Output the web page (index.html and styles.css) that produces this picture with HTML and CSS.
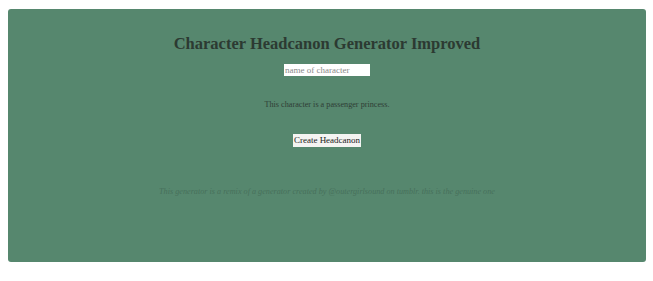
FILE: index.html
```html
<!DOCTYPE html>
<html>
<head>
<meta charset="utf-8">
<link rel="stylesheet" href="styles.css">
</head>
<body>
<div class="panel">
  <h1 class="title">Character Headcanon Generator Improved</h1>
  <input class="name-input" type="text" placeholder="name of character">
  <p class="result">This character is a passenger princess.</p>
  <button class="create-btn">Create Headcanon</button>
  <p class="credit">This generator is a remix of a generator created by @outergirlsound on tumblr. this is the genuine one</p>
</div>
</body>
</html>
```
FILE: styles.css
```css
html, body {
  margin: 0;
  padding: 0;
  background: #ffffff;
}
body {
  padding: 9px 7px 0 8px;
  font-family: "Liberation Serif", "Times New Roman", serif;
}
.panel {
  background: #56876e;
  border-radius: 3px;
  height: 253px;
  box-sizing: border-box;
  display: flex;
  flex-direction: column;
  align-items: center;
  padding-top: 23px;
}
.title {
  margin: 0;
  font-size: 16.5px;
  line-height: 24px;
  font-weight: bold;
  color: #2c3a32;
}
.name-input {
  margin-top: 8px;
  width: 86px;
  height: 12px;
  box-sizing: border-box;
  border: none;
  padding: 0 1px;
  font-family: "Liberation Serif", serif;
  font-size: 9px;
  background: #ffffff;
  color: #333;
}
.name-input::placeholder {
  color: #8a8a8a;
}
.result {
  margin: 23px 0 0;
  font-size: 8.2px;
  line-height: 12px;
  color: #2f3d35;
}
.create-btn {
  margin-top: 23px;
  width: 68px;
  height: 13px;
  padding: 0;
  border: none;
  background: #f4f4f2;
  font-family: "Liberation Serif", serif;
  font-size: 9px;
  line-height: 13px;
  color: #222;
}
.credit {
  margin: 39px 0 0;
  font-style: italic;
  font-size: 8.2px;
  line-height: 12px;
  color: #47705b;
}
```
